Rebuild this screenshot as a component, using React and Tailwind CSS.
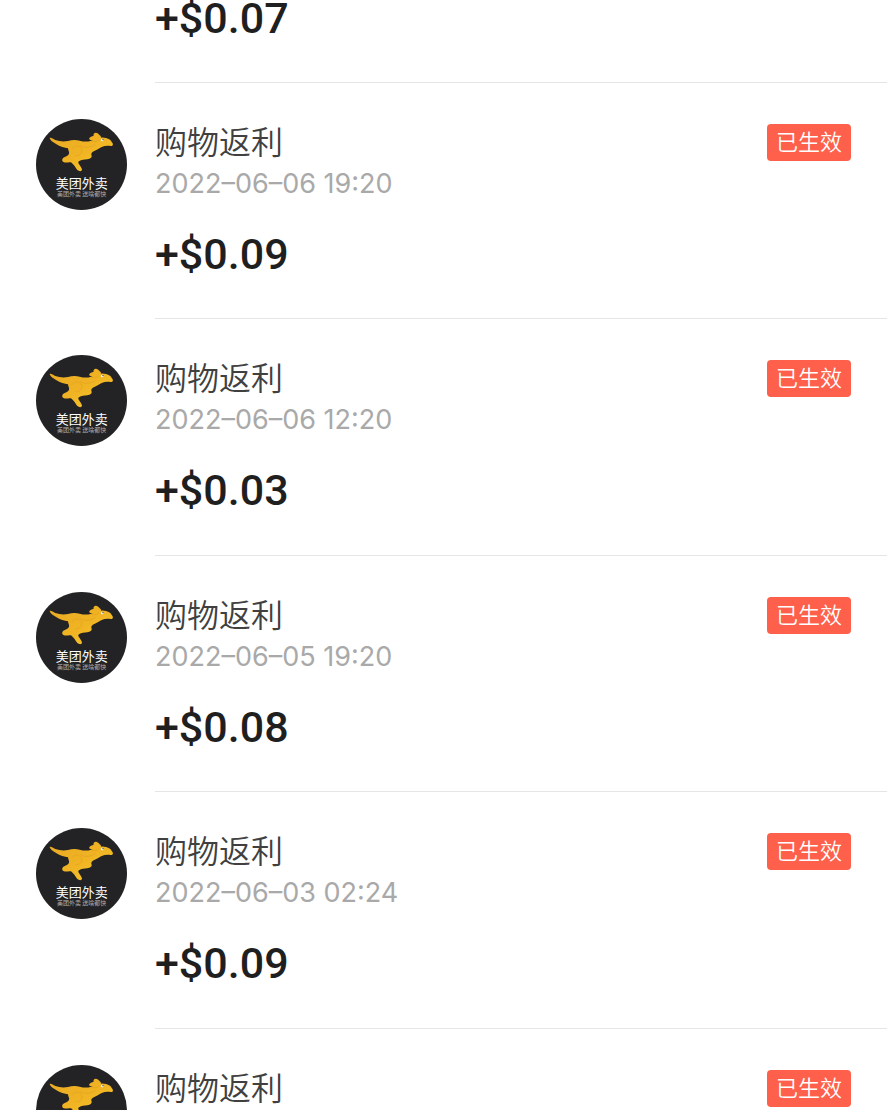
const records = [
  { id: 1, amount: '+$0.07', partial: true },
  { id: 2, title: '购物返利', date: '2022–06–06 19:20', amount: '+$0.09', status: '已生效' },
  { id: 3, title: '购物返利', date: '2022–06–06 12:20', amount: '+$0.03', status: '已生效' },
  { id: 4, title: '购物返利', date: '2022–06–05 19:20', amount: '+$0.08', status: '已生效' },
  { id: 5, title: '购物返利', date: '2022–06–03 02:24', amount: '+$0.09', status: '已生效' },
  { id: 6, title: '购物返利', status: '已生效' },
]

function MerchantLogo() {
  return (
    <svg viewBox="0 0 273 273" className="w-[91px] h-[91px] shrink-0" role="img" aria-label="美团外卖">
      <defs>
        <linearGradient id="gold" x1="0" y1="0" x2="1" y2="1">
          <stop offset="0" stopColor="#eaaa25" />
          <stop offset="0.5" stopColor="#f0b323" />
          <stop offset="1" stopColor="#f6c92f" />
        </linearGradient>
      </defs>
      <circle cx="136.5" cy="136.5" r="136.5" fill="#232325" />
      {/* Kangourou */}
      <g transform="translate(36 19)">
        <path
          d="M5 38 C9 36 15 41 22 44 C34 48 46 50 60 47 C70 44 83 43 95 46 C107 49 118 50 129 46 L134 44 C127 45 122 43 124 39 C125 34 132 33 137 31 C135 26 140 21 146 23 C152 25 153 29 158 32 C159 34 158 36 160 37 C168 36 177 39 186 43 C190 46 190 49 193 52 C197 58 194 63 188 62 C180 61 170 61 163 64 C154 68 147 73 139 77 C132 80 129 84 130 88 C133 93 130 98 124 100 C116 102 106 102 99 105 C94 107 90 109 91 113 C94 119 100 125 102 132 C102 139 94 139 88 134 C82 126 77 117 69 111 C62 109 56 113 48 111 C41 108 41 101 46 97 C54 93 61 91 63 85 C65 79 60 76 60 69 C50 67 36 63 28 58 C19 53 7 47 5 38 Z"
          fill="url(#gold)"
        />
        <path d="M72 70 C80 58 96 60 101 72 C104 84 94 92 82 91" fill="none" stroke="#e3a21f" strokeWidth="2" />
        <path d="M96 60 C108 69 126 68 142 58" fill="none" stroke="#e3a21f" strokeWidth="2" />
        <path d="M130 47 C138 51 147 49 153 43" fill="none" stroke="#e3a21f" strokeWidth="2" />
        <circle cx="163" cy="44" r="4" fill="#fff" />
        <circle cx="165" cy="43" r="2" fill="#2a2418" />
      </g>
      <text x="137" y="207" textAnchor="middle" fill="#fff" fontSize="39" className="font-['Noto_Sans_CJK_SC',sans-serif]">
        美团外卖
      </text>
      <text x="137" y="231" textAnchor="middle" fill="#b0b0b0" fontSize="18" className="font-['Noto_Sans_CJK_SC',sans-serif]">
        美团外卖 送啥都快
      </text>
    </svg>
  )
}

function RecordRow({ record }) {
  // La première ligne de la liste a déjà défilé, il ne reste que son montant
  if (record.partial) {
    return (
      <li className="pl-[155px]">
        <div className="h-[83px] border-b border-[#e5e5e5]">
          <p className="font-['Roboto',sans-serif] text-[43px] leading-[36px] font-medium text-[#1f1f1f]">{record.amount}</p>
        </div>
      </li>
    )
  }

  return (
    <li className="group flex gap-7 pl-9">
      <div className="pt-9">
        <MerchantLogo />
      </div>
      <div className="flex-1 pt-9 pb-10 group-even:pb-[39px] border-b border-[#e5e5e5]">
        <div className="flex items-center justify-between pr-9">
          <h2 className="text-[32px] leading-[47px] font-[350] text-[#404040]">{record.title}</h2>
          <span className="rounded bg-[#ff604c] px-[9px] text-[22px] leading-[37px] font-[350] text-white">
            {record.status}
          </span>
        </div>
        {record.date && (
          <p className="text-[27px] leading-[35px] text-[#a9a9a9]">{record.date}</p>
        )}
        {record.amount && (
          <p className="mt-7 font-['Roboto',sans-serif] text-[43px] leading-[50px] font-medium text-[#1f1f1f]">{record.amount}</p>
        )}
      </div>
    </li>
  )
}

export default function App() {
  return (
    <main className="h-screen overflow-hidden bg-white font-['Inter','Noto_Sans_CJK_SC',sans-serif]">
      <ul>
        {records.map((record) => (
          <RecordRow key={record.id} record={record} />
        ))}
      </ul>
    </main>
  )
}
